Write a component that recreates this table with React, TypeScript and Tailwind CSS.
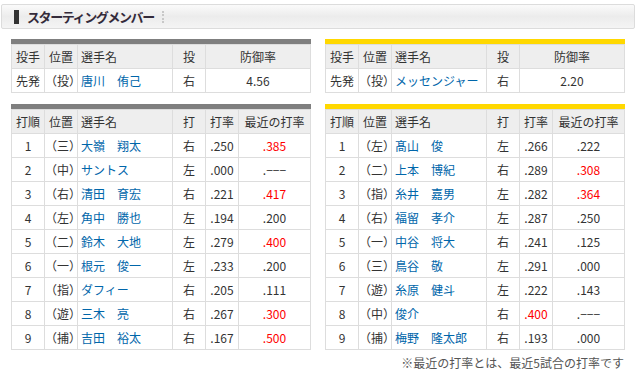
import React from "react";

const F = { fontFamily: '"Noto Sans CJK JP", "Noto Sans", sans-serif' };

type Bat = [string, string, string, string, string, string, boolean, boolean];

const left: Bat[] = [
  ["1", "（三）", "大嶺　翔太", "右", ".250", ".385", false, true],
  ["2", "（中）", "サントス", "左", ".000", ".−−−", false, false],
  ["3", "（右）", "清田　育宏", "右", ".221", ".417", false, true],
  ["4", "（左）", "角中　勝也", "左", ".194", ".200", false, false],
  ["5", "（二）", "鈴木　大地", "左", ".279", ".400", false, true],
  ["6", "（一）", "根元　俊一", "左", ".233", ".200", false, false],
  ["7", "（指）", "ダフィー", "右", ".205", ".111", false, false],
  ["8", "（遊）", "三木　亮", "右", ".267", ".300", false, true],
  ["9", "（捕）", "吉田　裕太", "右", ".167", ".500", false, true],
];

const right: Bat[] = [
  ["1", "（左）", "髙山　俊", "左", ".266", ".222", false, false],
  ["2", "（二）", "上本　博紀", "右", ".289", ".308", false, true],
  ["3", "（指）", "糸井　嘉男", "左", ".282", ".364", false, true],
  ["4", "（右）", "福留　孝介", "左", ".287", ".250", false, false],
  ["5", "（一）", "中谷　将大", "右", ".241", ".125", false, false],
  ["6", "（三）", "鳥谷　敬", "左", ".291", ".000", false, false],
  ["7", "（遊）", "糸原　健斗", "左", ".222", ".143", false, false],
  ["8", "（中）", "俊介", "右", ".400", ".−−−", true, false],
  ["9", "（捕）", "梅野　隆太郎", "右", ".193", ".000", false, false],
];

const th = "border border-[#dddddd] bg-[#eeeeee] font-normal h-[24px] p-0";
const td = "border border-[#dddddd] bg-white h-[24px] p-0 text-center";

function PitcherTable({ bar, name, era }: { bar: string; name: string; era: string }) {
  return (
    <div className="w-[300px]">
      <div className={`h-[5px] ${bar}`} />
      <table className="w-[300px] border-collapse table-fixed text-[12px] text-[#333333]" style={F}>
        <colgroup>
          <col className="w-[33px]" />
          <col className="w-[33px]" />
          <col className="w-[95px]" />
          <col className="w-[33px]" />
          <col />
        </colgroup>
        <thead>
          <tr>
            <th className={`${th} text-center`}>投手</th>
            <th className={`${th} text-center`}>位置</th>
            <th className={`${th} text-left pl-[3px]`}>選手名</th>
            <th className={`${th} text-center`}>投</th>
            <th className={`${th} text-center`}>防御率</th>
          </tr>
        </thead>
        <tbody>
          <tr>
            <td className={td}>先発</td>
            <td className={td}>（投）</td>
            <td className={`${td} !text-left pl-[3px] text-[#0066aa]`}>{name}</td>
            <td className={td}>右</td>
            <td className={td}>{era}</td>
          </tr>
        </tbody>
      </table>
    </div>
  );
}

function BatTable({ bar, rows }: { bar: string; rows: Bat[] }) {
  return (
    <div className="w-[300px]">
      <div className={`h-[5px] ${bar}`} />
      <table className="w-[300px] border-collapse table-fixed text-[12px] text-[#333333]" style={F}>
        <colgroup>
          <col className="w-[33px]" />
          <col className="w-[33px]" />
          <col className="w-[95px]" />
          <col className="w-[33px]" />
          <col className="w-[33px]" />
          <col />
        </colgroup>
        <thead>
          <tr>
            <th className={`${th} text-center`}>打順</th>
            <th className={`${th} text-center`}>位置</th>
            <th className={`${th} text-left pl-[3px]`}>選手名</th>
            <th className={`${th} text-center`}>打</th>
            <th className={`${th} text-center`}>打率</th>
            <th className={`${th} text-center`}>最近の打率</th>
          </tr>
        </thead>
        <tbody>
          {rows.map((r) => (
            <tr key={r[0]}>
              <td className={td}>{r[0]}</td>
              <td className={td}>{r[1]}</td>
              <td className={`${td} !text-left pl-[3px] text-[#0066aa]`}>{r[2]}</td>
              <td className={td}>{r[3]}</td>
              <td className={`${td} ${r[6] ? "text-[#ff0000]" : ""}`}>{r[4]}</td>
              <td className={`${td} ${r[7] ? "text-[#ff0000]" : ""}`}>{r[5]}</td>
            </tr>
          ))}
        </tbody>
      </table>
    </div>
  );
}

export default function App() {
  return (
    <div className="w-[638px] h-[384px] bg-white relative overflow-hidden" style={F}>
      <div className="pt-[4px] pl-[1px]">
        <div className="w-[634px] h-[25px] border border-[#dcdcdc] rounded-[2px] bg-gradient-to-b from-[#fafafa] via-[#ececec] to-[#f4f4f4] flex items-center">
          <div className="ml-[12px] w-[5px] h-[14px] bg-[#333333]" />
          <span className="ml-[8px] text-[13px] font-bold text-[#332a3a] tracking-[-1.4px] leading-none">スターティングメンバー</span>
          <div className="ml-[8px] h-[12px] border-l-2 border-dotted border-[#c8c8c8]" />
        </div>
      </div>
      <div className="flex gap-[14px] pl-[11px] mt-[10px]">
        <PitcherTable bar="bg-[#7f7f7f]" name="唐川　侑己" era="4.56" />
        <PitcherTable bar="bg-[#ffd800]" name="メッセンジャー" era="2.20" />
      </div>
      <div className="flex gap-[14px] pl-[11px] mt-[11px]">
        <BatTable bar="bg-[#7f7f7f]" rows={left} />
        <BatTable bar="bg-[#ffd800]" rows={right} />
      </div>
      <div className="w-[624px] text-right text-[12px] text-[#555555] mt-[4px]">
        ※最近の打率とは、最近5試合の打率です
      </div>
    </div>
  );
}
